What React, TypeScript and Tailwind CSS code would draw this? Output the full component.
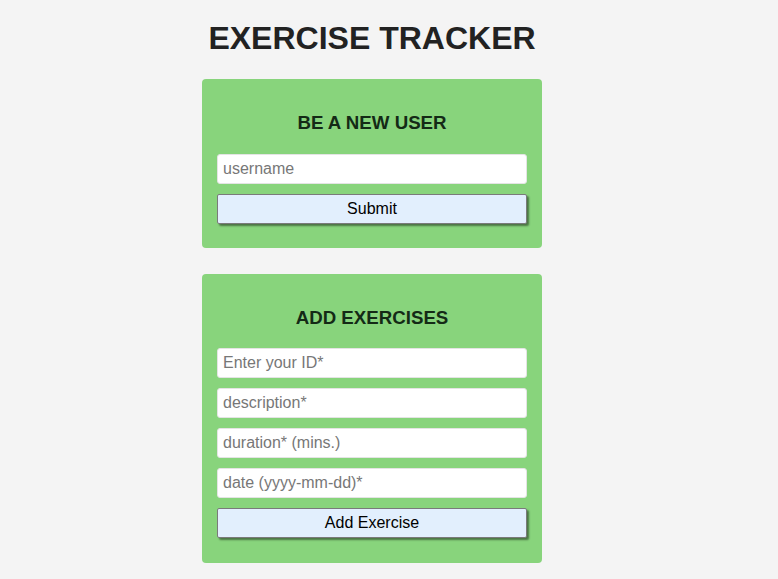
import React from 'react';

const inputCls =
  'h-[30px] w-full rounded-[3px] border border-[#e4e4e4] bg-white px-[5px] text-[16px] text-[#222] placeholder:text-[#777] outline-none';

const buttonCls =
  'h-[30px] w-full rounded-[2px] border border-[#7a7a7a] bg-[#e2effd] text-[16px] text-black shadow-[2px_2px_2px_rgba(0,0,0,0.45)]';

function Card({ title, tight, children }: { title: string; tight?: boolean; children: React.ReactNode }) {
  return (
    <div className={`rounded-[4px] bg-[#88d47c] px-[15px] pt-[33px] ${tight ? 'pb-[25px]' : 'pb-[24px]'}`}>
      <h3
        className={`text-center text-[18.7px] font-bold leading-[22px] text-[#142a16] ${tight ? 'mb-[19px]' : 'mb-[20px]'}`}
      >
        {title}
      </h3>
      <div className="flex flex-col gap-[10px]">{children}</div>
    </div>
  );
}

export default function App() {
  return (
    <div className="min-h-screen bg-[#f4f4f4] font-['Liberation_Sans',Arial,sans-serif]">
      <div className="ml-[202px] w-[340px] pt-[20px]">
        <h1 className="text-center text-[32px] font-bold leading-[37px] text-[#222]">EXERCISE TRACKER</h1>

        <div className="mt-[22px]">
          <Card title="BE A NEW USER">
            <input className={inputCls} placeholder="username" />
            <button className={buttonCls}>Submit</button>
          </Card>
        </div>

        <div className="mt-[26px]">
          <Card title="ADD EXERCISES" tight>
            <input className={inputCls} placeholder="Enter your ID*" />
            <input className={inputCls} placeholder="description*" />
            <input className={inputCls} placeholder="duration* (mins.)" />
            <input className={inputCls} placeholder="date (yyyy-mm-dd)*" />
            <button className={buttonCls}>Add Exercise</button>
          </Card>
        </div>
      </div>
    </div>
  );
}
